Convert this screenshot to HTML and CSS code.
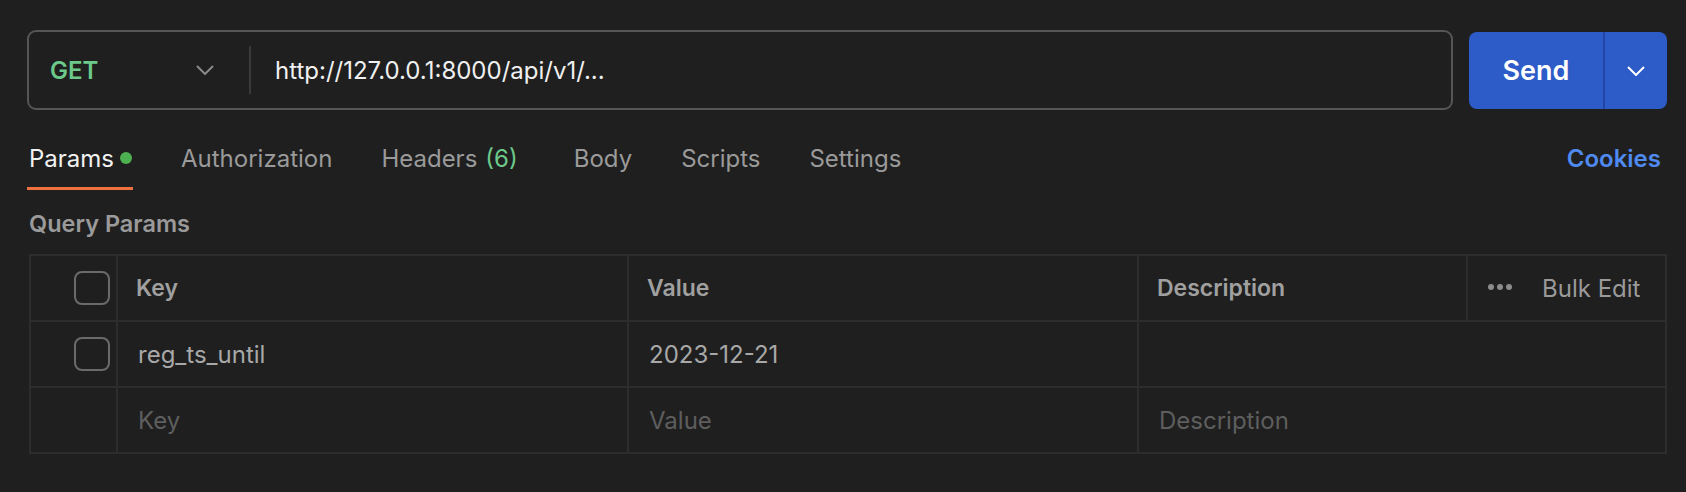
FILE: index.html
```html
<!DOCTYPE html>
<html>
<head>
<meta charset="utf-8">
<link rel="stylesheet" href="styles.css">
</head>
<body>
<div class="page">
  <div class="topbar">
    <div class="urlbox">
      <div class="method">
        <span class="method-name">GET</span>
        <svg class="chev" width="18" height="10" viewBox="0 0 18 10"><path d="M1 1 L9 9 L17 1" fill="none" stroke="#8a8a8a" stroke-width="2"/></svg>
      </div>
      <div class="vdiv"></div>
      <div class="url">http://127.0.0.1:8000/api/v1/...</div>
    </div>
    <div class="send">
      <span class="send-label">Send</span>
      <span class="send-div"></span>
      <span class="send-more"><svg width="18" height="10" viewBox="0 0 18 10"><path d="M1 1 L9 9 L17 1" fill="none" stroke="#ffffff" stroke-width="2"/></svg></span>
    </div>
  </div>

  <div class="tabs">
    <div class="tab active">Params <span class="dot"></span></div>
    <div class="tab">Authorization</div>
    <div class="tab tab-wide">Headers <span class="count">(6)</span></div>
    <div class="tab">Body</div>
    <div class="tab">Scripts</div>
    <div class="tab">Settings</div>
    <div class="spacer"></div>
    <div class="cookies">Cookies</div>
  </div>

  <div class="section-title">Query Params</div>

  <div class="table">
    <div class="row head">
      <div class="cell chk"><span class="box"></span></div>
      <div class="cell">Key</div>
      <div class="cell">Value</div>
      <div class="cell">Description</div>
      <div class="cell bulk"><span class="dots"><i></i><i></i><i></i></span><span class="bulk-text">Bulk Edit</span></div>
    </div>
    <div class="row">
      <div class="cell chk"><span class="box"></span></div>
      <div class="cell val">reg_ts_until</div>
      <div class="cell val">2023-12-21</div>
      <div class="cell span2"></div>
    </div>
    <div class="row last">
      <div class="cell chk"></div>
      <div class="cell ph">Key</div>
      <div class="cell ph">Value</div>
      <div class="cell ph span2">Description</div>
    </div>
  </div>
</div>
</body>
</html>
```

FILE: styles.css
```css
html, body {
  margin: 0;
  padding: 0;
  background: #1f1f1f;
}
body {
  font-family: Inter, "Noto Sans", "Liberation Sans", sans-serif;
  color: #a0a0a0;
}
.page {
  padding: 30px 19px 0 27px;
}
.topbar {
  display: flex;
  gap: 16px;
  height: 80px;
}
.urlbox {
  flex: 1;
  display: flex;
  align-items: center;
  border: 2px solid #555555;
  border-radius: 9px;
  box-sizing: border-box;
}
.method {
  width: 200px;
  display: flex;
  align-items: center;
  justify-content: space-between;
  padding: 0 15px 0 21px;
  box-sizing: border-box;
}
.method-name {
  color: #6cc98a;
  font-weight: 600;
  font-size: 24px;
}
.vdiv {
  width: 2px;
  height: 48px;
  background: #3a3a3a;
  margin-left: 20px;
}
.url {
  margin-left: 24px;
  color: #f0f0f0;
  font-size: 24px;
}
.send {
  width: 198px;
  margin-top: 2px;
  height: 77px;
  background: #2d5bc8;
  border-radius: 8px;
  display: flex;
  align-items: center;
}
.send-label {
  width: 134px;
  text-align: center;
  color: #ffffff;
  font-weight: 600;
  font-size: 27px;
}
.send-div {
  width: 2px;
  height: 100%;
  background: #2346a6;
}
.send-more {
  flex: 1;
  display: flex;
  justify-content: center;
  align-items: center;
}
.tabs {
  display: flex;
  align-items: center;
  gap: 49px;
  padding-top: 15px;
  margin-left: 2px;
}
.tab {
  font-size: 24px;
  color: #9a9a9a;
  height: 66px;
  display: flex;
  align-items: center;
  box-sizing: border-box;
  position: relative;
}
.tab.active {
  color: #f2f2f2;
}
.tab.active::after {
  content: "";
  position: absolute;
  left: -2px;
  right: -1px;
  bottom: 1px;
  height: 3px;
  background: #f0703f;
}
.dot {
  width: 12px;
  height: 12px;
  border-radius: 50%;
  background: #4caf50;
  margin-left: 6px;
}
.count {
  color: #6cc98a;
  margin-left: 8px;
}
.tab-wide { margin-right: 7px; }
.spacer { flex: 1; }
.cookies {
  color: #4f8af0;
  font-weight: 600;
  font-size: 24px;
  margin-right: 6px;
}
.section-title {
  font-size: 23.5px;
  font-weight: 600;
  color: #9a9a9a;
  margin-left: 2px;
  height: 48px;
  display: flex;
  align-items: center;
  margin-top: 8px;
}
.table {
  margin-left: 2px;
  margin-top: 7px;
  border: 2px solid #2d2d2d;
  border-bottom: 0;
  display: flex;
  flex-direction: column;
}
.row {
  display: grid;
  grid-template-columns: 87px 511px 510px 329px 1fr;
  height: 66px;
  border-bottom: 2px solid #2d2d2d;
  box-sizing: border-box;
}
.cell {
  display: flex;
  align-items: center;
  padding-left: 18px;
  border-right: 2px solid #2d2d2d;
  font-size: 24px;
  color: #a8a8a8;
  box-sizing: border-box;
}
.cell:last-child { border-right: 0; }
.head .cell {
  font-weight: 600;
  font-size: 23px;
  color: #a0a0a0;
}
.span2 { grid-column: span 2; }
.chk {
  justify-content: flex-end;
  padding: 0 6px 0 0;
}
.box {
  width: 36px;
  height: 34px;
  border: 2px solid #6a6a6a;
  border-radius: 8px;
  box-sizing: border-box;
}
.val {
  color: #a8a8a8;
  padding-left: 20px;
}
.ph {
  color: #5e5e5e;
  padding-left: 20px;
}
.head .bulk.cell {
  padding-left: 20px;
  font-weight: 400;
  color: #9a9a9a;
}
.dots {
  display: flex;
  gap: 3px;
  margin-right: 30px;
  margin-bottom: 2px;
}
.dots i {
  width: 6px;
  height: 6px;
  border-radius: 50%;
  background: #8c8c8c;
  display: block;
}
.bulk-text {
  font-size: 24px;
}
```
